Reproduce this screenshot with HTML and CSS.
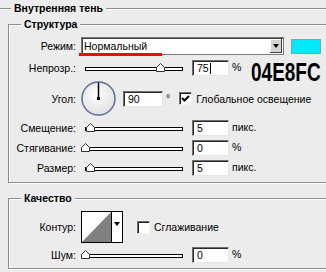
FILE: index.html
```html
<!DOCTYPE html>
<html lang="ru">
<head>
    <meta charset="UTF-8">
    <title>Внутренняя тень</title>
    <link rel="stylesheet" href="styles.css">
</head>
<body>

<fieldset class="group outer">
    <legend>Внутренняя тень</legend>

    <fieldset class="group">
        <legend>Структура</legend>

        <div class="row mode-row">
            <span class="lbl">Режим:</span>
            <div class="select">
                <span class="select-text">Нормальный</span>
                <span class="select-btn"><span class="arrow"></span></span>
            </div>
            <span class="swatch"></span>
            <span class="mark"></span>
        </div>

        <div class="row gap5">
            <span class="lbl">Непрозр.:</span>
            <div class="slider">
                <span class="track"></span>
                <svg class="thumb" style="left: 71px" width="9" height="9" viewBox="0 0 9 9"><path d="M.5 8.5V4.5L4.5.5l4 4v4z" fill="#fff" stroke="#333"/></svg>
            </div>
            <span class="field">75<span class="caret"></span></span>
            <span class="unit">%</span>
            <span class="hex">04E8FC</span>
        </div>

        <div class="row gap5 angle-row">
            <span class="lbl">Угол:</span>
            <svg class="dial" width="36" height="35" viewBox="0 0 36 35">
                <defs>
                    <radialGradient id="dialFill" cx="45%" cy="40%" r="65%">
                        <stop offset="0" stop-color="#ffffff"/>
                        <stop offset="1" stop-color="#dedede"/>
                    </radialGradient>
                </defs>
                <circle cx="17.5" cy="17.5" r="16.5" fill="url(#dialFill)" stroke="#5d6f98" stroke-width="1.5"/>
                <line x1="17.5" y1="17.5" x2="17.5" y2="1.5" stroke="#000" stroke-width="1.5"/>
                <rect x="16" y="16" width="3" height="3" fill="#000"/>
            </svg>
            <span class="field angle">90</span>
            <span class="unit">°</span>
            <span class="check on">
                <svg width="11" height="11" viewBox="0 0 11 11"><path d="M2 5l2.5 2.5L9 3" fill="none" stroke="#000" stroke-width="2"/></svg>
            </span>
            <span class="check-text">Глобальное освещение</span>
        </div>

        <div class="row">
            <span class="lbl">Смещение:</span>
            <div class="slider">
                <span class="track"></span>
                <svg class="thumb" style="left: 1px" width="9" height="9" viewBox="0 0 9 9"><path d="M.5 8.5V4.5L4.5.5l4 4v4z" fill="#fff" stroke="#333"/></svg>
            </div>
            <span class="field">5</span>
            <span class="unit">пикс.</span>
        </div>

        <div class="row">
            <span class="lbl">Стягивание:</span>
            <div class="slider wide">
                <span class="track"></span>
                <svg class="thumb" style="left: 0px" width="9" height="9" viewBox="0 0 9 9"><path d="M.5 8.5V4.5L4.5.5l4 4v4z" fill="#fff" stroke="#333"/></svg>
            </div>
            <span class="field">0</span>
            <span class="unit">%</span>
        </div>

        <div class="row">
            <span class="lbl">Размер:</span>
            <div class="slider">
                <span class="track"></span>
                <svg class="thumb" style="left: 1px" width="9" height="9" viewBox="0 0 9 9"><path d="M.5 8.5V4.5L4.5.5l4 4v4z" fill="#fff" stroke="#333"/></svg>
            </div>
            <span class="field">5</span>
            <span class="unit">пикс.</span>
        </div>
    </fieldset>

    <fieldset class="group quality">
        <legend>Качество</legend>

        <div class="row contour-row">
            <span class="lbl">Контур:</span>
            <div class="contour">
                <svg class="contour-curve" width="29" height="30" viewBox="0 0 29 30" preserveAspectRatio="none">
                    <rect width="29" height="30" fill="#fff"/>
                    <polygon points="0,30 29,0 29,30" fill="#808080"/>
                </svg>
                <span class="contour-btn"><span class="arrow"></span></span>
            </div>
            <span class="check smooth"></span>
            <span class="check-text">Сглаживание</span>
        </div>

        <div class="row">
            <span class="lbl">Шум:</span>
            <div class="slider wide">
                <span class="track"></span>
                <svg class="thumb" style="left: 0px" width="9" height="9" viewBox="0 0 9 9"><path d="M.5 8.5V4.5L4.5.5l4 4v4z" fill="#fff" stroke="#333"/></svg>
            </div>
            <span class="field">0</span>
            <span class="unit">%</span>
        </div>
    </fieldset>
</fieldset>

</body>
</html>
```

FILE: styles.css
```css
html, body { margin: 0; height: 272px; overflow: hidden; }
body {
    background: #ececec;
    color: #000;
    font: 10.5px "Liberation Sans", Arial, sans-serif;
}

/* etched group boxes, cut off by the window on the right */
.group {
    margin: 9px 0 0 8px;
    padding: 6px 0 6px;
    width: 317px;
    min-width: 0;
    border: 1px solid #8e8e8e;
    border-right: none;
    box-shadow: 1px 1px 0 #fff, inset 1px 1px 0 #fff;
}
.group legend {
    margin-left: 12px;
    padding: 0 3px;
    line-height: 13px;
    font-weight: bold;
    background: #ececec;
}
.outer {
    margin: 2px 0 0;
    width: 326px;
    padding: 0;
    border-left: none;
    border-bottom: none;
    box-shadow: inset 0 1px 0 #fff;
}
.outer > legend { margin-left: 11px; }
.outer > .group:first-of-type { margin-top: 3px; }
.quality { padding-bottom: 5px; }

.row {
    position: relative;
    display: flex;
    align-items: center;
    height: 16px;
    margin-top: 4px;
}
.row:first-of-type { margin-top: 0; }
.row.gap5 { margin-top: 5px; }
.lbl { flex: none; width: 67px; text-align: right; }

/* blend mode */
.mode-row { height: 18px; }
.select {
    display: flex;
    flex: none;
    width: 203px;
    height: 18px;
    margin-left: 5px;
    box-sizing: border-box;
    border: 1px solid #7b7b7b;
    box-shadow: inset 1px 1px 0 #3c3c3c;
    background: #fff;
}
.select-text { flex: 1; padding-left: 2px; line-height: 16px; }
.select-btn {
    display: flex;
    align-items: center;
    justify-content: center;
    width: 12px;
    margin: 1px 1px 1px 0;
    background: #d6d3ce;
    box-shadow: inset -1px -1px 0 #404040, inset 1px 1px 0 #fff;
}
.arrow {
    width: 0;
    height: 0;
    border-left: 3px solid transparent;
    border-right: 3px solid transparent;
    border-top: 4px solid #000;
}
.swatch {
    flex: none;
    width: 30px;
    height: 15px;
    margin-left: 7px;
    box-sizing: border-box;
    border: 1px solid #9a9a9a;
    background: #04e8fc;
}
.mark {
    position: absolute;
    left: 70px;
    top: 16px;
    width: 83px;
    height: 3px;
    background: #ff0000;
}

/* sliders */
.slider { position: relative; flex: none; width: 98px; height: 16px; margin-left: 9px; }
.slider.wide { width: 102px; margin-left: 5px; }
.track {
    display: block;
    margin-top: 7px;
    height: 2px;
    border: 1px solid #000;
    background: #fff;
}
.thumb { position: absolute; top: 3px; }

/* text fields */
.field {
    flex: none;
    width: 37px;
    height: 16px;
    margin-left: 9px;
    padding-left: 4px;
    box-sizing: border-box;
    border: 1px solid;
    border-color: #6f6f6f #e6e6e6 #e6e6e6 #6f6f6f;
    box-shadow: inset 1px 1px 0 #2a2a2a;
    background: #fff;
    line-height: 14px;
}
.field.angle { width: 40px; margin-left: 6px; }
.caret {
    display: inline-block;
    width: 1px;
    height: 11px;
    margin-left: 1px;
    vertical-align: -2px;
    background: #000;
}
.unit { margin-left: 3px; margin-bottom: 2px; }
.hex {
    align-self: flex-start;
    margin: 4px 0 0 10px;
    font-size: 25px;
    font-weight: bold;
    line-height: 16px;
    white-space: nowrap;
    transform: scaleX(0.76);
    transform-origin: left;
}

/* angle */
.angle-row { height: 35px; }
.dial { flex: none; margin-left: 5px; }

/* checkboxes */
.check {
    flex: none;
    width: 13px;
    height: 13px;
    margin-left: 9px;
    box-sizing: border-box;
    border: 1px solid;
    border-color: #707070 #f4f4f4 #f4f4f4 #707070;
    box-shadow: inset 1px 1px 0 #1e1e1e;
    background: #fff;
}
.check svg { display: block; }
.check-text { margin-left: 4px; white-space: nowrap; }

/* contour */
.contour-row { height: 32px; margin-top: 0; }
.contour {
    display: flex;
    flex: none;
    width: 42px;
    height: 32px;
    margin-left: 5px;
    box-sizing: border-box;
    border: 1px solid #000;
    background: #fff;
}
.contour-curve { display: block; width: 29px; height: 30px; border-right: 1px solid #000; }
.contour-btn { display: flex; flex: 1; justify-content: center; padding-top: 10px; }
.check.smooth { margin-left: 14px; }
```
